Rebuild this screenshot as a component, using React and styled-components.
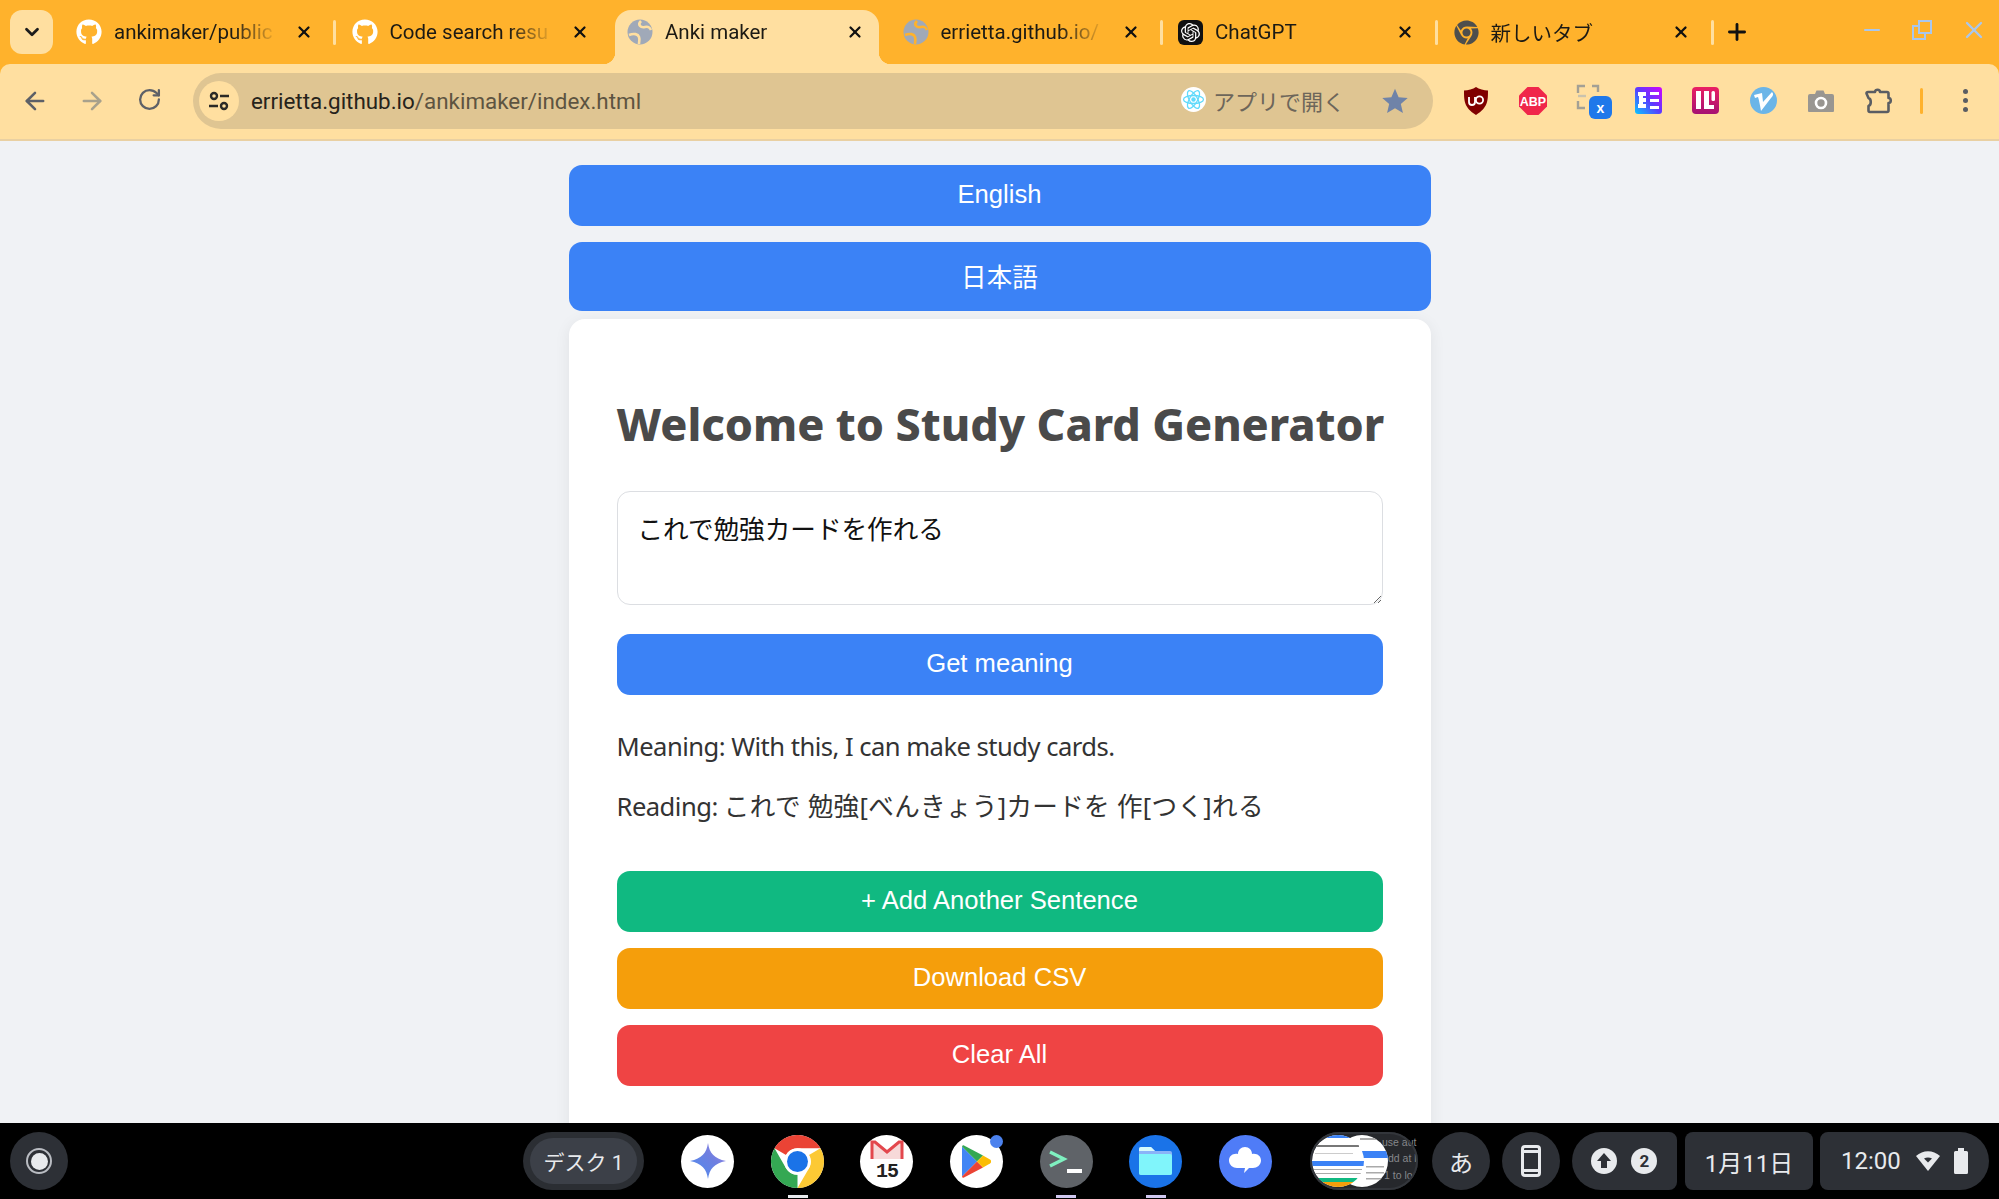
import React from 'react';
import styled, { createGlobalStyle } from 'styled-components';
import { ArrowLeft, ArrowRight, RotateCw, X, Plus, ChevronDown, Minus } from 'lucide-react';
import { FaGithub, FaChrome } from 'react-icons/fa';
import { SiOpenai } from 'react-icons/si';

const GlobalStyle = createGlobalStyle`
  html, body { margin: 0; padding: 0; height: 100%; overflow: hidden; }
  #root { height: 100%; }
  * { box-sizing: border-box; }
`;

const UI_FONT = `Roboto, "Noto Sans CJK JP", sans-serif`;
const PAGE_FONT = `"Noto Sans", "Noto Sans CJK JP", sans-serif`;
const BUTTON_FONT = `"Liberation Sans", "Noto Sans CJK JP", sans-serif`;

const Screen = styled.div`
  height: 100vh;
  display: flex;
  flex-direction: column;
  background: #ffb22c;
  font-family: ${UI_FONT};
`;

/* tab strip */
const TabStrip = styled.div`
  height: 64px;
  flex: none;
  display: flex;
  align-items: flex-end;
  padding-left: 10px;
`;

const TabSearch = styled.div`
  width: 43px;
  height: 44px;
  margin: 0 11px 10px 0;
  border-radius: 12px;
  background: #ffdfa0;
  display: flex;
  align-items: center;
  justify-content: center;
  color: #1c1c1c;
`;

const Tab = styled.div`
  position: relative;
  width: 264px;
  height: 54px;
  margin-right: 11.5px;
  padding: 0 0 10px 12px;
  display: flex;
  align-items: center;
  gap: 12px;
  border-radius: 16px 16px 0 0;
  background: ${(p) => (p.$active ? '#ffdfa0' : 'transparent')};
  font-size: 20.5px;
  color: #1c1a14;

  ${(p) =>
    p.$divider &&
    `&::after {
      content: '';
      position: absolute;
      right: -8px;
      top: 10px;
      width: 3px;
      height: 25px;
      border-radius: 2px;
      background: #ffdfa0;
    }`}

  ${(p) =>
    p.$active &&
    `&::before, &::after {
      content: '';
      position: absolute;
      bottom: 0;
      width: 12px;
      height: 12px;
    }
    &::before {
      left: -12px;
      background: radial-gradient(circle at 0 0, transparent 12px, #ffdfa0 12.5px);
    }
    &::after {
      right: -12px;
      background: radial-gradient(circle at 100% 0, transparent 12px, #ffdfa0 12.5px);
    }`}
`;

const TabTitle = styled.span`
  flex: none;
  width: 164px;
  white-space: nowrap;
  mask-image: linear-gradient(to right, #000 72%, transparent 100%);
`;

const TabClose = styled.span`
  display: flex;
  margin-left: 5px;
  color: #111;
`;

const NewTab = styled.div`
  display: flex;
  margin: 0 0 19px 7px;
  color: #111;
`;

const WindowControls = styled.div`
  margin-left: auto;
  align-self: flex-start;
  display: flex;
  align-items: center;
  gap: 28px;
  padding: 16px 11px 0 0;
  color: #a9c7ee;
`;

/* toolbar */
const Toolbar = styled.div`
  height: 77px;
  flex: none;
  display: flex;
  align-items: center;
  padding: 0 0 2px 0;
  background: #ffdfa0;
  border-bottom: 2px solid #e9d0a2;
  border-radius: 10px 10px 0 0;
`;

const NavButton = styled.div`
  width: 57.5px;
  display: flex;
  justify-content: center;
  color: ${(p) => (p.$disabled ? '#a8a18c' : '#5d6067')};
`;

const NavGroup = styled.div`
  display: flex;
  width: 193px;
  padding-left: 6px;
`;

const Omnibox = styled.div`
  width: 1240px;
  height: 56px;
  flex: none;
  display: flex;
  align-items: center;
  padding: 0 24px 0 6px;
  border-radius: 28px;
  background: #dfc592;
`;

const SiteChip = styled.div`
  width: 40px;
  height: 40px;
  border-radius: 50%;
  background: #ffdfa0;
  display: flex;
  align-items: center;
  justify-content: center;
`;

const Url = styled.div`
  margin-left: 12px;
  font-size: 22.4px;
  color: #5d5441;
  white-space: nowrap;
`;

const UrlHost = styled.span`
  color: #26231b;
`;

const OpenApp = styled.div`
  margin-left: auto;
  display: flex;
  align-items: center;
  gap: 7px;
  padding-bottom: 2px;
  font-size: 22px;
  color: #6d665a;
`;

const StarWrap = styled.div`
  display: flex;
  margin-left: 36px;
`;

const Extensions = styled.div`
  display: flex;
  margin-left: 14px;
`;

const ExtensionCell = styled.div`
  width: 57.5px;
  height: 40px;
  display: flex;
  align-items: center;
  justify-content: center;
`;

const ToolbarDivider = styled.div`
  width: 3px;
  height: 26px;
  margin-left: 13px;
  border-radius: 2px;
  background: #ffb22c;
`;

const MenuDots = styled.div`
  margin-left: 40px;
  display: flex;
  flex-direction: column;
  gap: 4px;
`;

const MenuDot = styled.span`
  width: 5px;
  height: 5px;
  border-radius: 50%;
  background: #5a5d63;
`;

/* page */
const Page = styled.main`
  flex: 1;
  min-height: 0;
  overflow: hidden;
  background: #f0f2f5;
  display: flex;
  flex-direction: column;
  align-items: center;
  padding-top: 24px;
`;

const Column = styled.div`
  width: 862px;
  flex: none;
`;

const ActionButton = styled.button`
  display: block;
  width: 100%;
  height: ${(p) => p.$height || 61}px;
  margin: 0 0 ${(p) => p.$gap ?? 16}px;
  border: 0;
  border-radius: 13px;
  background: ${(p) => p.$color || '#3b82f6'};
  color: #fff;
  font-family: ${BUTTON_FONT};
  font-size: 25.6px;
  padding: 0 0 2px;
`;

const Card = styled.section`
  padding: 48px;
  background: #fff;
  border-radius: 16px;
  box-shadow: 0 3px 16px rgba(0, 0, 0, 0.07);
  height: 900px;
`;

const Heading = styled.h1`
  margin: 28px 0 36px;
  font-family: ${PAGE_FONT};
  font-size: 44.8px;
  line-height: 58px;
  padding-bottom: 2px;
  font-weight: 800;
  letter-spacing: -0.05px;
  color: #4a4a4a;
  white-space: nowrap;
`;

const SentenceInput = styled.textarea`
  display: block;
  width: 100%;
  height: 114px;
  margin-bottom: 29px;
  padding: 18px 20px;
  border: 1.6px solid #dcdee2;
  border-radius: 13px;
  outline: none;
  resize: vertical;
  font-family: ${PAGE_FONT};
  font-size: 25.6px;
  line-height: 40px;
  color: #111;
`;

const ResultLine = styled.p`
  margin: ${(p) => p.$top}px 0 0;
  font-family: ${PAGE_FONT};
  font-size: 25.6px;
  line-height: 40px;
  letter-spacing: 0.3px;
  color: #333;
`;

const Latin = styled.span`
  letter-spacing: -0.53px;
`;

const CardActions = styled.div`
  margin-top: 44px;
`;

/* shelf */
const Shelf = styled.footer`
  height: 76px;
  flex: none;
  display: flex;
  align-items: center;
  padding: 0 10px;
  background: #000;
  color: #e8eaed;
`;

const Launcher = styled.div`
  width: 58px;
  height: 58px;
  flex: none;
  border-radius: 50%;
  background: #2d3036;
  display: flex;
  align-items: center;
  justify-content: center;
`;

const LauncherRing = styled.div`
  width: 26px;
  height: 26px;
  border-radius: 50%;
  border: 2.5px solid #b9bcc2;
  padding: 2.5px;
  display: flex;
`;

const LauncherCore = styled.div`
  flex: 1;
  border-radius: 50%;
  background: #e8eaed;
`;

const DeskPill = styled.div`
  width: 121px;
  height: 58px;
  flex: none;
  margin-left: 455px;
  padding: 6px 7px;
  border-radius: 29px;
  background: #2b2e33;
`;

const DeskLabel = styled.div`
  height: 100%;
  border-radius: 23px;
  background: #3c4048;
  display: flex;
  align-items: center;
  justify-content: center;
  font-size: 21px;
`;

const Apps = styled.div`
  display: flex;
  flex: none;
  margin-left: 19px;
`;

const AppCell = styled.div`
  position: relative;
  width: 89.6px;
  height: 76px;
  display: flex;
  align-items: center;
  justify-content: center;

  ${(p) =>
    p.$running &&
    `&::after {
      content: '';
      position: absolute;
      bottom: 1px;
      left: 35px;
      width: 20px;
      height: 3px;
      background: ${p.$running};
    }`}
`;

const AppDisc = styled.div`
  position: relative;
  width: 53px;
  height: 53px;
  border-radius: 50%;
  background: ${(p) => p.$bg};
  display: flex;
  align-items: center;
  justify-content: center;
`;

const AppBadge = styled.span`
  position: absolute;
  top: 0;
  right: 0;
  width: 13px;
  height: 13px;
  border-radius: 50%;
  background: #4c82ee;
`;

const MailDate = styled.span`
  position: absolute;
  left: 0;
  right: 0;
  bottom: 7px;
  text-align: center;
  font-family: "Liberation Mono", monospace;
  font-size: 20px;
  line-height: 19px;
  font-weight: 700;
  letter-spacing: -1px;
  color: #222;
`;

const Preview = styled.div`
  width: 108px;
  height: 58px;
  margin-left: 19.8px;
  flex: none;
  display: flex;
`;

const TrayCircle = styled.div`
  width: 58px;
  height: 58px;
  margin-left: ${(p) => p.$gap}px;
  flex: none;
  border-radius: 50%;
  background: #2d3036;
  display: flex;
  align-items: center;
  justify-content: center;
  font-size: 24px;
`;

const TrayBlock = styled.div`
  height: 58px;
  width: ${(p) => p.$width}px;
  margin-left: ${(p) => p.$gap}px;
  flex: none;
  display: flex;
  align-items: center;
  justify-content: ${(p) => p.$justify || 'center'};
  gap: ${(p) => p.$spacing || 0}px;
  padding-left: ${(p) => p.$inset || 0}px;
  background: #2d3036;
  border-radius: ${(p) => p.$radius};
  font-size: 24px;
`;

const TrayBadge = styled.span`
  width: 26px;
  height: 26px;
  border-radius: 50%;
  background: #e8eaed;
  color: #2d3036;
  font-size: 17px;
  font-weight: 700;
  display: flex;
  align-items: center;
  justify-content: center;
`;

const TrayGlyphs = styled.span`
  display: flex;
  align-items: center;
  gap: 14px;
  margin-left: 15px;
`;

/* drawings */
const GlobeIcon = ({ cut }) => (
  <svg width="26" height="26" viewBox="0 0 26 26">
    <circle cx="13" cy="13" r="12.5" fill="#a0a9b8" />
    <path d="M14 2c-4 4 0 7 4 6s5 1 6 3M2 16c5-2 9-1 10 2s0 4 0 7" fill="none" stroke={cut} strokeWidth="2.6" />
  </svg>
);

const SiteInfoIcon = () => (
  <svg width="24" height="24" viewBox="0 0 24 24" fill="none" stroke="#2b2a26" strokeWidth="2.4">
    <circle cx="7" cy="7" r="3" />
    <path d="M13 7h9M2 17h9" />
    <circle cx="17" cy="17" r="3" />
  </svg>
);

const ReactAppIcon = () => (
  <svg width="25" height="25" viewBox="0 0 25 25">
    <circle cx="12.5" cy="12.5" r="12.5" fill="#fff" />
    <g fill="none" stroke="#61dafb" strokeWidth="1.3">
      <ellipse cx="12.5" cy="12.5" rx="10" ry="4" />
      <ellipse cx="12.5" cy="12.5" rx="10" ry="4" transform="rotate(60 12.5 12.5)" />
      <ellipse cx="12.5" cy="12.5" rx="10" ry="4" transform="rotate(120 12.5 12.5)" />
    </g>
    <circle cx="12.5" cy="12.5" r="2.2" fill="#61dafb" />
  </svg>
);

const StarIcon = () => (
  <svg width="28" height="28" viewBox="0 0 24 24">
    <path d="M12 1.5l3.1 7.2 7.8.7-5.9 5.2 1.8 7.6L12 18.2l-6.8 4 1.8-7.6L1.1 9.4l7.8-.7z" fill="#6f83a8" />
  </svg>
);

const UBlockIcon = () => (
  <svg width="26" height="28" viewBox="0 0 26 28">
    <path d="M13 0c3 2 8 3.500 12 3.500 0 10 0 17-12 24.500C1 20.500 1 13.500 1 3.500 5 3.500 10 2 13 0z" fill="#800000" />
    <path d="M6 10v5a3 3 0 0 0 6 0v-5" fill="none" stroke="#fff" strokeWidth="1.8" />
    <circle cx="16.500" cy="13" r="3.600" fill="none" stroke="#fff" strokeWidth="1.800" />
  </svg>
);

const AbpIcon = () => (
  <svg width="28" height="28" viewBox="0 0 28 28">
    <path d="M8.500 0h11L28 8.500v11L19.500 28h-11L0 19.500v-11z" fill="#f0264a" />
    <text x="14" y="19" textAnchor="middle" fontFamily="Liberation Sans" fontWeight="700" fontSize="12.500" fill="#fff">ABP</text>
  </svg>
);

const CaptureIcon = () => (
  <svg width="36" height="36" viewBox="0 0 36 36" style={{ marginLeft: 6, marginTop: 2 }}>
    <path d="M2 9V2h7M16 2h6v6M2 17v7h7" fill="none" stroke="#a3a095" strokeWidth="2.400" />
    <path d="M2 12h8" stroke="#c9c3ae" strokeWidth="2.400" />
    <rect x="13" y="12" width="23" height="23" rx="6" fill="#1f78ea" />
    <text x="24.500" y="29" textAnchor="middle" fontFamily="Liberation Sans" fontWeight="700" fontSize="14" fill="#fff">x</text>
  </svg>
);

const BarsIcon = () => (
  <svg width="27" height="27" viewBox="0 0 27 27">
    <defs>
      <linearGradient id="barsFill" x1="0" y1="1" x2="1" y2="0">
        <stop offset="0" stopColor="#08c8ff" />
        <stop offset="0.5" stopColor="#5a3cff" />
        <stop offset="1" stopColor="#d400ff" />
      </linearGradient>
    </defs>
    <rect width="27" height="27" rx="3" fill="url(#barsFill)" />
    <path d="M3 5h8v4H8v2h3v4H8v2h3v4H3v-4h1v-8H3zM15 5h9v3h-9zM15 12h9v3h-9zM15 19h9v3h-9z" fill="#fff" />
  </svg>
);

const PinkIcon = () => (
  <svg width="27" height="27" viewBox="0 0 27 27">
    <defs>
      <linearGradient id="pinkFill" x1="0" y1="0" x2="0" y2="1">
        <stop offset="0" stopColor="#ea1f63" />
        <stop offset="1" stopColor="#a51273" />
      </linearGradient>
    </defs>
    <rect width="27" height="27" rx="4" fill="url(#pinkFill)" />
    <path d="M4 4h5v18H4zM12 4h5v14h5v4H12z" fill="#fff" />
    <rect x="19.500" y="4" width="3.500" height="10" rx="1.500" fill="#fff" />
  </svg>
);

const VeeIcon = () => (
  <svg width="27" height="27" viewBox="0 0 27 27">
    <circle cx="13.500" cy="13.500" r="13.500" fill="#6bb5e8" />
    <path d="M4 8l8-2 1 9 9-10c2 2 1 4-1 6L11 24c-1-6-2-11-3-14l-3 1z" fill="#fff" />
  </svg>
);

const CameraIcon = () => (
  <svg width="26" height="24" viewBox="0 0 26 24">
    <path d="M2 5h5l1.500-3.500h7L17 5h7a2 2 0 0 1 2 2v15a1 1 0 0 1-1 1H1a1 1 0 0 1-1-1V7a2 2 0 0 1 2-2z" fill="#999691" />
    <circle cx="13" cy="14" r="5" fill="none" stroke="#fff" strokeWidth="2.600" />
  </svg>
);

const PuzzleIcon = () => (
  <svg width="30" height="30" viewBox="0 0 30 30" fill="none" stroke="#5a5d63" strokeWidth="2.600" strokeLinejoin="round">
    <path d="M5 6h7c0-3 5-3 5 0h7a1.500 1.500 0 0 1 1.500 1.500V12c3 0 3 5 0 5v7.500A1.500 1.500 0 0 1 24 26H7a1.500 1.500 0 0 1-1.500-1.500V20c3-1 3-7 0-8L3.500 7.500C3.500 6.500 4 6 5 6z" />
  </svg>
);

const GeminiIcon = () => (
  <svg width="36" height="36" viewBox="0 0 36 36">
    <defs>
      <linearGradient id="geminiFill" x1="0" y1="1" x2="1" y2="0">
        <stop offset="0" stopColor="#4b8df0" />
        <stop offset="0.6" stopColor="#6f7fe0" />
        <stop offset="1" stopColor="#a58ae8" />
      </linearGradient>
    </defs>
    <path d="M18 0c1.500 10 6 15.500 18 18-12 2.500-16.500 8-18 18-1.500-10-6-15.500-18-18C12 15.500 16.500 10 18 0z" fill="url(#geminiFill)" />
  </svg>
);

const ChromeIcon = () => (
  <svg width="53" height="53" viewBox="0 0 48 48">
    <circle cx="24" cy="24" r="24" fill="#fff" />
    <path d="M3.200 12A24 24 0 0 1 44.800 12H24A12 12 0 0 0 13.600 18z" fill="#ea4335" />
    <path d="M44.800 12A24 24 0 0 1 24 48L34.400 30A12 12 0 0 0 34.400 18z" fill="#fcc934" />
    <path d="M24 48A24 24 0 0 1 3.200 12L13.600 30A12 12 0 0 0 24 36z" fill="#34a853" />
    <circle cx="24" cy="24" r="12" fill="#fff" />
    <circle cx="24" cy="24" r="9.500" fill="#1a73e8" />
  </svg>
);

const MailMark = () => (
  <svg width="34" height="24" viewBox="0 0 34 24" style={{ marginTop: -20 }}>
    <path d="M2 20V3h3l12 10L29 3h3v17" fill="#f7d5d5" stroke="#e0343a" strokeWidth="3" opacity="0.9" />
  </svg>
);

const PlayIcon = () => (
  <svg width="29" height="33" viewBox="0 0 29 33">
    <path d="M0 1.500V31.500L15 16.500z" fill="#4285f4" />
    <path d="M0 1.500L15 16.500l6-6L2 .5C1 0 .5.500 0 1.500z" fill="#34a853" />
    <path d="M0 31.500L15 16.500l6 6L2 32.500c-1 .500-1.500.500-2-1z" fill="#ea4335" />
    <path d="M21 10.500L15 16.500l6 6 7-4c1.500-1 1.500-3 0-4z" fill="#fbbc04" />
  </svg>
);

const TerminalIcon = () => (
  <svg width="34" height="26" viewBox="0 0 34 26">
    <path d="M1 4l14 7L1 18" fill="none" stroke="#7ff0c0" strokeWidth="3.400" />
    <rect x="18" y="21" width="15" height="4" fill="#fff" />
  </svg>
);

const FolderIcon = () => (
  <svg width="33" height="28" viewBox="0 0 33 28">
    <path d="M2 0h10l4 4h15a2 2 0 0 1 2 2v20a2 2 0 0 1-2 2H2a2 2 0 0 1-2-2V2a2 2 0 0 1 2-2z" fill="#8ab4f8" />
    <path d="M0 7h31a2 2 0 0 1 2 2v17a2 2 0 0 1-2 2H2a2 2 0 0 1-2-2z" fill="#80f5fb" />
    <path d="M2 0h10l4 4H0V2a2 2 0 0 1 2-2z" fill="#d6fbfd" />
  </svg>
);

const CloudIcon = () => (
  <svg width="32" height="29" viewBox="0 0 32 29">
    <path d="M16 0c4 0 7 3 7 7 5-1 9 2 9 6.500S28 21 24 21h-4l-5 5 1-5H8c-4 0-8-3-8-7.500S4 6 9 7c0-4 3-7 7-7z" fill="#fff" />
  </svg>
);

const PreviewArt = () => (
  <svg width="108" height="58" viewBox="0 0 108 58">
    <defs>
      <clipPath id="discA"><circle cx="28" cy="29" r="26" /></clipPath>
      <clipPath id="discB"><circle cx="52" cy="29" r="26" /></clipPath>
    </defs>
    <rect width="108" height="58" rx="29" fill="#26282c" />
    <g fontFamily="Liberation Sans" fill="#85878b" fontSize="10.500">
      <text x="72" y="14">use aut</text>
      <text x="78" y="30">dd at l</text>
      <text x="74" y="47">1 to lo</text>
    </g>
    <g clipPath="url(#discB)">
      <rect x="26" width="56" height="58" fill="#fff" />
      <rect x="40" y="19" width="40" height="7" fill="#3b82f6" />
      <rect x="50" y="6" width="24" height="2" fill="#aaa" />
      <rect x="56" y="34" width="18" height="1.500" fill="#aaa" />
      <rect x="56" y="40" width="18" height="1.500" fill="#aaa" />
      <rect x="56" y="46" width="16" height="1.500" fill="#aaa" />
    </g>
    <g clipPath="url(#discA)">
      <rect width="56" height="58" fill="#fff" />
      <rect y="3" width="56" height="3" fill="#3b82f6" />
      <rect x="5" y="13" width="44" height="2" fill="#777" />
      <rect x="5" y="21" width="38" height="1" fill="#ccc" />
      <rect y="29" width="56" height="5" fill="#3b82f6" />
      <rect x="2" y="37" width="50" height="1" fill="#aaa" />
      <rect x="2" y="41" width="50" height="1" fill="#aaa" />
      <rect y="46" width="56" height="4" fill="#10b981" />
      <rect y="50" width="56" height="5" fill="#f59e0b" />
    </g>
    <rect x="1" y="1" width="106" height="56" rx="28" fill="none" stroke="#33363b" strokeWidth="2" />
  </svg>
);

const PhoneIcon = () => (
  <svg width="20" height="32" viewBox="0 0 20 32" fill="none" stroke="#e8eaed" strokeWidth="3">
    <rect x="1.500" y="1.500" width="17" height="29" rx="2.500" />
    <path d="M2 6.500h16M2 25.500h16" />
  </svg>
);

const UploadIcon = () => (
  <svg width="26" height="26" viewBox="0 0 26 26">
    <circle cx="13" cy="13" r="13" fill="#e8eaed" />
    <path d="M13 5l7 8h-4v7h-6v-7H6z" fill="#2d3036" />
  </svg>
);

const WifiIcon = () => (
  <svg width="24" height="20" viewBox="0 0 24 20">
    <path d="M12 20L0 5c7-6.500 17-6.500 24 0z" fill="#e8eaed" />
    <path d="M12 11.500L8 7.500c2.500-1.500 5.500-1.500 8 0z" fill="#2d3036" />
  </svg>
);

const BatteryIcon = () => (
  <svg width="14" height="26" viewBox="0 0 14 26">
    <path d="M4 0h6v3h2.500A1.500 1.500 0 0 1 14 4.500v20a1.500 1.500 0 0 1-1.500 1.500h-11A1.500 1.500 0 0 1 0 24.500v-20A1.500 1.500 0 0 1 1.500 3H4z" fill="#e8eaed" />
  </svg>
);

const RestoreIcon = () => (
  <svg width="20" height="20" viewBox="0 0 20 20" fill="none" stroke="currentColor" strokeWidth="2">
    <rect x="7" y="1" width="12" height="12" />
    <path d="M7 6H1v13h12v-6" />
  </svg>
);

const TABS = [
  { key: 'repo', title: 'ankimaker/public', icon: <FaGithub size={26} color="#fff" />, divider: true },
  { key: 'search', title: 'Code search resu', icon: <FaGithub size={26} color="#fff" /> },
  { key: 'anki', title: 'Anki maker', icon: <GlobeIcon cut="#ffdfa0" />, active: true },
  { key: 'pages', title: 'errietta.github.io/', icon: <GlobeIcon cut="#ffb22c" />, divider: true },
  { key: 'gpt', title: 'ChatGPT', icon: <SiOpenai size={25} color="#fff" style={{ background: '#111', borderRadius: 6, padding: 3 }} />, divider: true },
  { key: 'new', title: '新しいタブ', icon: <FaChrome size={25} color="#4e4f4d" />, divider: true },
];

const EXTENSIONS = [
  <UBlockIcon key="ublock" />,
  <AbpIcon key="abp" />,
  <CaptureIcon key="capture" />,
  <BarsIcon key="bars" />,
  <PinkIcon key="pink" />,
  <VeeIcon key="vee" />,
  <CameraIcon key="camera" />,
  <PuzzleIcon key="puzzle" />,
];

const App = () => {
  return (
    <Screen>
      <GlobalStyle />
      <TabStrip>
        <TabSearch>
          <ChevronDown size={22} strokeWidth={3} />
        </TabSearch>
        {TABS.map((tab) => (
          <Tab key={tab.key} $active={tab.active} $divider={tab.divider}>
            {tab.icon}
            <TabTitle>{tab.title}</TabTitle>
            <TabClose>
              <X size={18} strokeWidth={3} />
            </TabClose>
          </Tab>
        ))}
        <NewTab>
          <Plus size={26} strokeWidth={2.6} />
        </NewTab>
        <WindowControls>
          <Minus size={24} strokeWidth={2} />
          <RestoreIcon />
          <X size={28} strokeWidth={2} />
        </WindowControls>
      </TabStrip>

      <Toolbar>
        <NavGroup>
          <NavButton><ArrowLeft size={28} strokeWidth={2.2} /></NavButton>
          <NavButton $disabled><ArrowRight size={28} strokeWidth={2.2} /></NavButton>
          <NavButton><RotateCw size={25} strokeWidth={2.2} /></NavButton>
        </NavGroup>
        <Omnibox>
          <SiteChip><SiteInfoIcon /></SiteChip>
          <Url>
            <UrlHost>errietta.github.io</UrlHost>/ankimaker/index.html
          </Url>
          <OpenApp>
            <ReactAppIcon />
            アプリで開く
          </OpenApp>
          <StarWrap><StarIcon /></StarWrap>
        </Omnibox>
        <Extensions>
          {EXTENSIONS.map((icon) => (
            <ExtensionCell key={icon.key}>{icon}</ExtensionCell>
          ))}
        </Extensions>
        <ToolbarDivider />
        <MenuDots>
          <MenuDot />
          <MenuDot />
          <MenuDot />
        </MenuDots>
      </Toolbar>

      <Page>
        <Column>
          <ActionButton>English</ActionButton>
          <ActionButton $height={69} $gap={8}>日本語</ActionButton>
          <Card>
            <Heading>Welcome to Study Card Generator</Heading>
            <SentenceInput defaultValue="これで勉強カードを作れる" />
            <ActionButton $gap={0}>Get meaning</ActionButton>
            <ResultLine $top={32}>
              <Latin>Meaning: With this, I can make study cards.</Latin>
            </ResultLine>
            <ResultLine $top={20}>
              <Latin>Reading: </Latin>これで 勉強[べんきょう]カードを 作[つく]れる
            </ResultLine>
            <CardActions>
              <ActionButton $color="#10b981">+ Add Another Sentence</ActionButton>
              <ActionButton $color="#f59e0b">Download CSV</ActionButton>
              <ActionButton $color="#ef4444">Clear All</ActionButton>
            </CardActions>
          </Card>
        </Column>
      </Page>

      <Shelf>
        <Launcher>
          <LauncherRing><LauncherCore /></LauncherRing>
        </Launcher>
        <DeskPill><DeskLabel>デスク 1</DeskLabel></DeskPill>
        <Apps>
          <AppCell><AppDisc $bg="#fff"><GeminiIcon /></AppDisc></AppCell>
          <AppCell $running="#e8eaed"><ChromeIcon /></AppCell>
          <AppCell>
            <AppDisc $bg="#fff">
              <MailMark />
              <MailDate>15</MailDate>
            </AppDisc>
          </AppCell>
          <AppCell>
            <AppDisc $bg="#fff">
              <PlayIcon />
              <AppBadge />
            </AppDisc>
          </AppCell>
          <AppCell $running="#d0c8f0"><AppDisc $bg="#5f6368"><TerminalIcon /></AppDisc></AppCell>
          <AppCell $running="#d0c8f0"><AppDisc $bg="#1a73e8"><FolderIcon /></AppDisc></AppCell>
          <AppCell><AppDisc $bg="#4f7cf7"><CloudIcon /></AppDisc></AppCell>
        </Apps>
        <Preview><PreviewArt /></Preview>
        <TrayCircle $gap={14}>あ</TrayCircle>
        <TrayCircle $gap={12}><PhoneIcon /></TrayCircle>
        <TrayBlock $width={105} $gap={12} $spacing={14} $radius="29px 8px 8px 29px">
          <UploadIcon />
          <TrayBadge>2</TrayBadge>
        </TrayBlock>
        <TrayBlock $width={128} $gap={8} $radius="8px">1月11日</TrayBlock>
        <TrayBlock $width={169} $gap={7} $justify="flex-start" $inset={21} $radius="8px 29px 29px 8px">
          12:00
          <TrayGlyphs>
            <WifiIcon />
            <BatteryIcon />
          </TrayGlyphs>
        </TrayBlock>
      </Shelf>
    </Screen>
  );
};

export default App;
